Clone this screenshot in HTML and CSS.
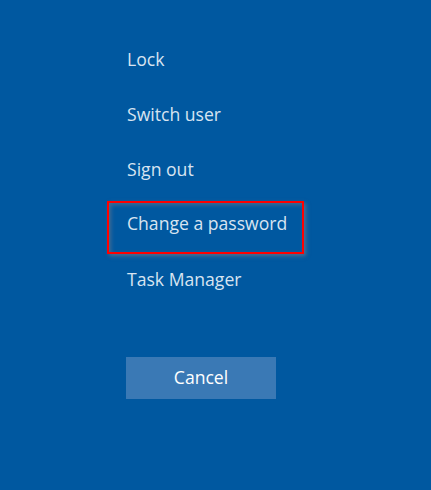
FILE: index.html
```html
<!DOCTYPE html>
<html>
<head>
<meta charset="utf-8">
<link rel="stylesheet" href="styles.css">
</head>
<body>
<div class="screen">
  <ul class="menu">
    <li class="item">Lock</li>
    <li class="item">Switch user</li>
    <li class="item">Sign out</li>
    <li class="item focused">Change a password</li>
    <li class="item">Task Manager</li>
  </ul>
  <button class="cancel">Cancel</button>
</div>
</body>
</html>
```

FILE: styles.css
```css
html, body {
  margin: 0;
  padding: 0;
  background: #0058a0;
  width: 431px;
  height: 490px;
  overflow: hidden;
}
.screen {
  display: flex;
  flex-direction: column;
  align-items: flex-start;
  padding: 36px 0 0 107px;
  font-family: "Open Sans", "Noto Sans", sans-serif;
}
.menu {
  list-style: none;
  margin: 0;
  padding: 0;
  display: flex;
  flex-direction: column;
}
.item {
  box-sizing: border-box;
  height: 55px;
  padding: 0 0 9px 18px;
  display: flex;
  align-items: center;
  font-size: 17.6px;
  color: #d8e4f1;
  border: 2px solid transparent;
}
.focused {
  width: 197px;
  height: 53px;
  margin: 0 0 2px 0;
  border-color: #ff0000;
  box-shadow: 2px 2px 4px rgba(110,120,140,0.7), inset 2px 2px 4px rgba(110,120,140,0.6);
}
.cancel {
  margin: 46px 0 0 19px;
  width: 150px;
  height: 42px;
  border: none;
  background: #3a79b5;
  color: #ffffff;
  font-family: "Open Sans", "Noto Sans", sans-serif;
  font-size: 17.6px;
  padding: 0 0 3px 0;
}
```
